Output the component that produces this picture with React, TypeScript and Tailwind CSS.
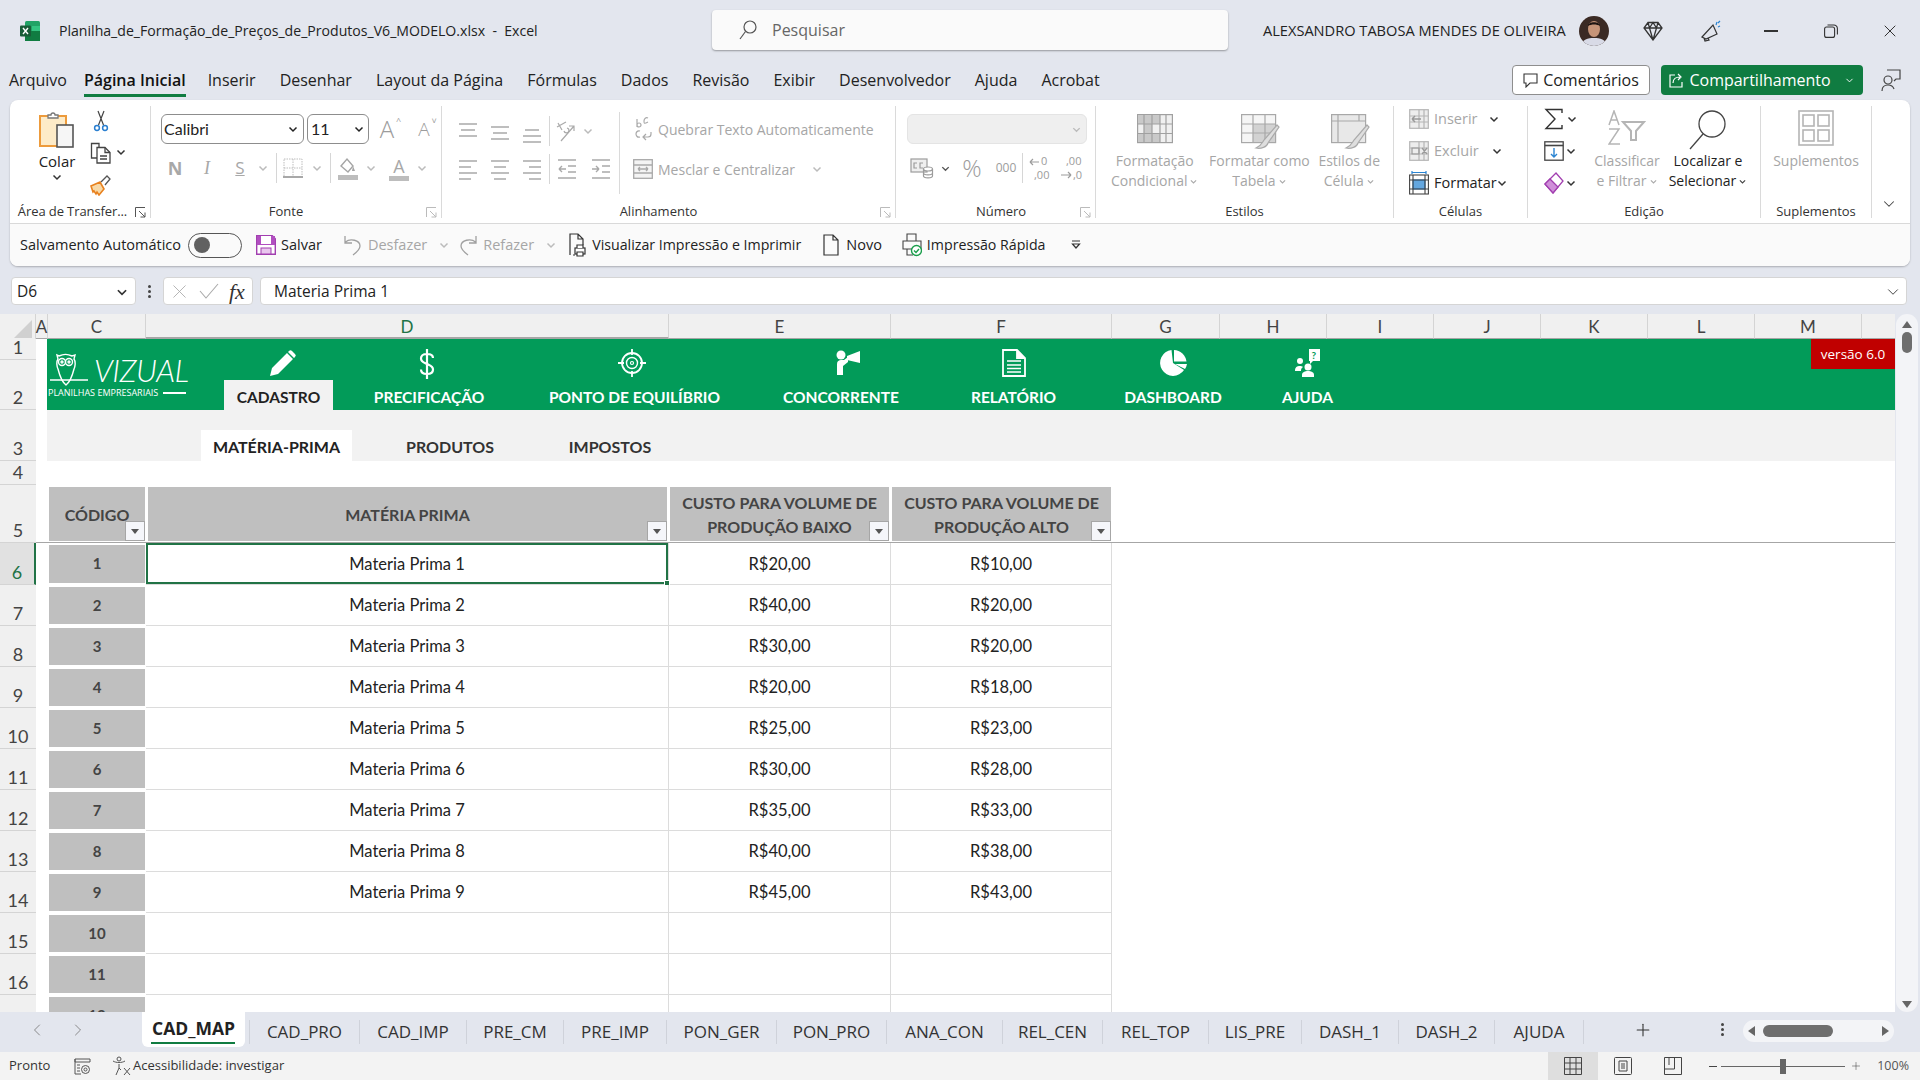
import React from "react";
import { ChevronDown, ChevronLeft, ChevronRight, Plus, X } from "lucide-react";

const ui = "font-['Open_Sans',sans-serif]";
const cal = "font-['Lato',sans-serif]";

const Chev = ({ c = "#444", s = 12 }: { c?: string; s?: number }) => (
  <svg width={s} height={s} viewBox="0 0 12 12" fill="none" stroke={c} strokeWidth="1.5">
    <path d="M2.5 4.5 6 8l3.5-3.5" />
  </svg>
);

const Sep = () => <div className="w-px h-[30px] bg-[#d6d6d6]" />;

const Launcher = ({ c = "#bbb", cls }: { c?: string; cls: string }) => (
  <svg className={cls} width="11" height="11" viewBox="0 0 11 11" fill="none" stroke={c}>
    <path d="M.5 10V.5H10M4 4l6 6M10 5.5V10H5.5" />
  </svg>
);

const Group = ({ label, launcher, cls, labelCls = "", children }: { label: string; launcher?: string; cls: string; labelCls?: string; children: React.ReactNode }) => (
  <div className={"relative flex flex-col my-[6px] h-[112px] border-r border-[#dadada] " + cls}>
    <div className="flex flex-1 min-h-0">{children}</div>
    <div className={"h-[14px] leading-[14px] text-[13px] text-center text-[#333] whitespace-nowrap " + labelCls}>{label}</div>
    {launcher && <Launcher c={launcher} cls="absolute right-[4px] bottom-0" />}
  </div>
);

const ExcelLogo = () => (
  <svg width="20" height="20" viewBox="0 0 20 20">
    <rect x="5" width="15" height="20" rx="1.5" fill="#21a366" />
    <rect x="5" y="10" width="15" height="10" fill="#107c41" />
    <rect x="12" y="5" width="8" height="5" fill="#33c481" />
    <rect y="4.5" width="11" height="11" rx="1" fill="#185c37" />
    <path d="M3 7l5 6M8 7l-5 6" stroke="#fff" strokeWidth="1.4" />
  </svg>
);

const Lines = ({ ys, xs, c = "#a9a9a9" }: { ys: number[]; xs: [number, number][]; c?: string }) => (
  <svg width="20" height="24" viewBox="0 0 20 24" fill="none" stroke={c} strokeWidth="1.5">
    {ys.map((y, i) => (
      <path key={i} d={`M${xs[i][0]} ${y}H${xs[i][1]}`} />
    ))}
  </svg>
);

const Paste = () => (
  <svg width="36" height="40" viewBox="0 0 36 40" fill="none">
    <rect x="1" y="6" width="26" height="30" fill="#fdebc8" stroke="#ed9b3c" strokeWidth="2" />
    <path d="M9 8V5h3a2 2 0 0 1 4 0h3v3z" fill="#fff" stroke="#777" strokeWidth="1.3" />
    <rect x="18" y="15" width="16" height="22" fill="#f6f6f6" stroke="#555" strokeWidth="1.6" />
  </svg>
);
const Scissors = () => (
  <svg width="16" height="22" viewBox="0 0 16 22" fill="none">
    <path d="M5 1l5.5 14M11 1 5.5 15" stroke="#444" strokeWidth="1.2" />
    <circle cx="4" cy="18" r="2.4" stroke="#2a7fd0" strokeWidth="1.5" />
    <circle cx="12" cy="18" r="2.4" stroke="#2a7fd0" strokeWidth="1.5" />
  </svg>
);
const CopyIc = () => (
  <svg width="22" height="22" viewBox="0 0 22 22" fill="none" stroke="#444" strokeWidth="1.3">
    <path d="M7 16H1.5V1.5H9V6" />
    <path d="M7 5.5h8l5 5V21H7z" fill="#fff" />
    <path d="M15 5.5v5h5M10 14h7M10 17h7" />
  </svg>
);
const Brush = () => (
  <svg width="22" height="22" viewBox="0 0 22 22" fill="none">
    <path d="M1 12l9-4 4 7-5 6-2-3-1 2-2-3-1 1z" fill="#f7d9a8" stroke="#e8811e" strokeWidth="1.6" />
    <path d="M11 8l6-6 3 3-5 6" fill="#fff" stroke="#555" strokeWidth="1.3" />
  </svg>
);

const Letter = ({ ch, sz, mark }: { ch: string; sz: string; mark: string }) => (
  <span className="relative flex items-center text-[#9c9c9c] leading-[24px] h-[24px]">
    <span className={sz}>{ch}</span>
    <span className="absolute -right-[7px] -top-[2px] text-[9px] leading-[12px]">{mark}</span>
  </span>
);

const BorderIc = () => (
  <svg width="20" height="20" viewBox="0 0 20 20" fill="none" stroke="#bdbdbd" strokeDasharray="1.5 1">
    <rect x="1" y="1" width="18" height="18" />
    <path d="M10 1v18M1 10h18" />
    <path d="M0 19h20" stroke="#a8a8a8" strokeWidth="2" strokeDasharray="0" />
  </svg>
);
const FillIc = () => (
  <svg width="20" height="26" viewBox="0 0 20 26" fill="none">
    <path d="M3 11l6-7 6 7-5 6z" stroke="#a5a5a5" strokeWidth="1.4" />
    <path d="M15 11l2 5h-3z" fill="#a5a5a5" />
    <rect y="20" width="20" height="5" fill="#bdbdbd" />
  </svg>
);
const OrientIc = () => (
  <svg width="22" height="24" viewBox="0 0 22 24" fill="none" stroke="#aaa" strokeWidth="1.2">
    <path d="M2 8l9-5M3 4l4 7M12 9a2.5 2.5 0 1 1-3 3" />
    <path d="M6 22 19 7M14 7h5v5" />
  </svg>
);
const WrapIc = () => (
  <svg width="18" height="26" viewBox="0 0 18 26" fill="none" stroke="#a9a9a9" strokeWidth="1.2">
    <path d="M2 11V3M2 9a2 2 0 1 0 4 0 2 2 0 0 0-4 0M13 2c-2-1-4 .5-4 3s0 3 4 1" />
    <path d="M5 15c-3-1-4 2-4 3s1 4 4 3M16 16v2a3 3 0 0 1-3 3H8M11 18l-3 3 3 3" />
  </svg>
);
const MergeIc = () => (
  <svg width="20" height="20" viewBox="0 0 20 20" fill="none" stroke="#a9a9a9" strokeWidth="1.3">
    <rect x=".7" y=".7" width="18.6" height="18.6" fill="#f4f4f4" />
    <path d="M.7 6h18.6M.7 14h18.6M5 10h10M5 10l2-2M5 10l2 2M15 10l-2-2M15 10l-2 2" />
  </svg>
);
const CurrencyIc = () => (
  <svg width="24" height="24" viewBox="0 0 24 24" fill="none" stroke="#9c9c9c" strokeWidth="1.2">
    <rect x="1" y="3" width="16" height="13" fill="#efefef" />
    <path d="M7 7H4v5h3M13 7h-3v5h3" />
    <ellipse cx="18" cy="13" rx="4.5" ry="2" fill="#fff" />
    <path d="M13.5 13v7c0 2.5 9 2.5 9 0v-7M13.5 17c0 2.5 9 2.5 9 0" />
  </svg>
);
const DecIc = ({ up }: { up: boolean }) => (
  <svg width="24" height="28" viewBox="0 0 24 28" fill="none" stroke="#9c9c9c" strokeWidth="1.2">
    <path d={up ? "M11 8H2M2 8l3-3M2 8l3 3" : "M1 21h10M11 21l-3-3M11 21l-3 3"} />
    <text x={up ? 13 : 6} y="11" fontSize="11" fill="#9c9c9c" stroke="none">{up ? "0" : ",00"}</text>
    <text x={up ? 6 : 13} y="25" fontSize="11" fill="#9c9c9c" stroke="none">{up ? ",00" : ",0"}</text>
  </svg>
);
const CondIc = () => (
  <svg width="36" height="30" viewBox="0 0 36 30" stroke="#a0a0a0" strokeWidth="1.2">
    <rect x=".6" y=".6" width="34.8" height="28" fill="#f0f0f0" />
    <rect x="1" y="1" width="22" height="9" fill="#c9c9c9" stroke="none" />
    <rect x="7" y="10" width="8" height="9" fill="#c9c9c9" stroke="none" />
    <rect x="1" y="19" width="22" height="9" fill="#c9c9c9" stroke="none" />
    <path d="M.6 10h34.8M.6 19.500h34.800M7 .6v28M15 .6v28M23 .6v28M29 .6v28" fill="none" />
  </svg>
);
const TableIc = ({ plain }: { plain?: boolean }) => (
  <svg width="40" height="36" viewBox="0 0 40 36" stroke="#a8a8a8" strokeWidth="1.2">
    <rect x=".6" y=".6" width="34" height="28" fill={plain ? "#e8e8e8" : "#f5f5f5"} />
    {!plain && <rect x="12" y="10" width="22" height="18" fill="#d2d2d2" stroke="none" />}
    <path d={plain ? "M.6 7h34M7 .6v28M28 .6v7" : "M.6 10h34M.6 19h34M12 .6v28M24 .6v28"} fill="none" />
    <path d="M36 11 23 26c-2 3-2 5-8 8 5 1 11-1 12-5l11-16z" fill="#dedede" stroke="#aaa" />
  </svg>
);
const InsIc = ({ x }: { x?: boolean }) => (
  <svg width="20" height="20" viewBox="0 0 20 20" fill="none" stroke="#b5b5b5" strokeWidth="1.2">
    <rect x=".7" y=".7" width="18.6" height="18.6" fill="#ededed" />
    <path d="M.7 7h18.6M.7 13h18.6M10 .7v18.6M15 .7v18.6" />
    {x ? <path d="M3 7h7v6H3zM13 7l5 6M18 7l-5 6" stroke="#999" /> : <path d="M12 10H3M3 10l3-3M3 10l3 3" stroke="#999" strokeWidth="1.5" />}
  </svg>
);
const FormatIc = () => (
  <svg width="20" height="24" viewBox="0 0 20 24" fill="none" stroke="#444" strokeWidth="1.1">
    <path d="M3 1.500h14M3 0v3M17 0v3" stroke="#2a84d2" strokeWidth="1.2" />
    <rect x=".6" y="4" width="18.8" height="19" />
    <rect x="4" y="9" width="12" height="9" fill="#63a7e0" stroke="#2a84d2" />
    <path d="M.6 9h18.8M.6 18h18.800M4 4v19M16 4v19" />
  </svg>
);
const FillDown = () => (
  <svg width="20" height="20" viewBox="0 0 20 20" fill="none">
    <rect x=".8" y=".8" width="18.4" height="18.4" stroke="#444" strokeWidth="1.3" />
    <path d="M.8 4.500h18.400" stroke="#444" strokeWidth="1.6" />
    <path d="M10 7v9M7 13l3 3 3-3" stroke="#2a84d2" strokeWidth="1.4" />
  </svg>
);
const Eraser = () => (
  <svg width="20" height="22" viewBox="0 0 20 22" fill="none">
    <path d="M1 12 12 1l7 8-10 12z" fill="#fff" stroke="#a23fb0" strokeWidth="1.3" />
    <path d="M1 12l5-5 8 8-5 6z" fill="#cf8fd9" stroke="#a23fb0" strokeWidth="1.3" />
  </svg>
);
const SortIc = () => (
  <svg width="38" height="36" viewBox="0 0 38 36" fill="none" stroke="#b5b5b5" strokeWidth="1.5">
    <path d="M1 15 6 1l5 14M3 10h6M1 19h10L1 34h11" />
    <path d="M15 12h21l-8 9v9h-5v-9z" strokeWidth="2" />
  </svg>
);
const BigSearch = () => (
  <svg width="38" height="40" viewBox="0 0 38 40" fill="none" stroke="#444" strokeWidth="1.3">
    <circle cx="23" cy="14" r="13" />
    <path d="M14 24 1 39" />
  </svg>
);
const Addins = () => (
  <svg width="36" height="36" viewBox="0 0 36 36" fill="none" stroke="#b5b5b5" strokeWidth="1.6">
    <rect x="1" y="1" width="34" height="34" />
    <rect x="5" y="5" width="11" height="11" />
    <rect x="20" y="5" width="11" height="11" />
    <rect x="5" y="20" width="11" height="11" />
    <rect x="20" y="20" width="11" height="11" />
  </svg>
);

const Big = ({ cls, icon, top, sub, off }: { cls: string; icon: React.ReactNode; top: string; sub: string; off?: boolean }) => (
  <div className={"flex flex-col items-center pt-[4px] text-[14px] leading-[20px] " + cls + (off ? " text-[#a6a6a6]" : " text-[#222]")}>
    <div className="h-[41px] flex items-start justify-center">{icon}</div>
    <span className="whitespace-nowrap">{top}</span>
    {sub && (
      <span className="flex items-center gap-[2px] whitespace-nowrap">
        {sub}
        <Chev s={9} c={off ? "#aaa" : "#444"} />
      </span>
    )}
  </div>
);

const menu = ["Arquivo", "Página Inicial", "Inserir", "Desenhar", "Layout da Página", "Fórmulas", "Dados", "Revisão", "Exibir", "Desenvolvedor", "Ajuda", "Acrobat"];

const TitleBar = () => (
  <div className="h-[62px] flex items-center text-[#222]">
    <div className="ml-[20px]"><ExcelLogo /></div>
    <div className="ml-[19px] w-[653px] text-[14.100px] whitespace-nowrap">Planilha_de_Formação_de_Preços_de_Produtos_V6_MODELO.xlsx&nbsp; -&nbsp; Excel</div>
    <div className="h-[40px] w-[516px] bg-[#fafafa] rounded-[4px] shadow-[0_1px_2px_rgba(0,0,0,0.35)] flex items-center pl-[27px] text-[16px] text-[#666] -mt-[2px]">
      <svg width="18" height="20" viewBox="0 0 18 20" fill="none" stroke="#555" strokeWidth="1.200">
        <circle cx="11" cy="7" r="6" />
        <path d="M6.500 11.500 1 19" />
      </svg>
      <span className="ml-[15px]">Pesquisar</span>
    </div>
    <div className="ml-[35px] w-[305px] text-[14.600px] whitespace-nowrap">ALEXSANDRO TABOSA MENDES DE OLIVEIRA</div>
    <svg className="ml-[11px]" width="30" height="30" viewBox="0 0 30 30">
      <clipPath id="av"><circle cx="15" cy="15" r="15" /></clipPath>
      <g clipPath="url(#av)">
        <rect width="30" height="30" fill="#3b2a24" />
        <path d="M2 30c1-7 7-8 13-8s12 1 13 8z" fill="#d8dae6" />
        <ellipse cx="15" cy="13" rx="6" ry="8" fill="#c69478" />
        <path d="M9 10c0-5 12-5 12 0-3-2-9-2-12 0z" fill="#1e1512" />
      </g>
    </svg>
    <svg className="ml-[34px]" width="20" height="20" viewBox="0 0 20 20" fill="none" stroke="#333" strokeWidth="1.300">
      <path d="M5 1.500h10L19 7l-9 12L1 7zM1 7h18M6.500 7 10 19l3.500-12M5 1.500 6.500 7 10 1.500 13.500 7 15 1.500" />
    </svg>
    <svg className="ml-[37px]" width="22" height="24" viewBox="0 0 22 24" fill="none" stroke="#333" strokeWidth="1.200">
      <path d="M2 18 13 6l4 9-11 5zM4 19l1 3 4-1-1-2" />
      <path d="M17 3l-1 3M20 7l-2 1M20 2l-2 2" stroke="#2a84d2" />
    </svg>
    <div className="ml-[42px] w-[14px] h-[1.500px] bg-[#333]" />
    <svg className="ml-[46px]" width="14" height="14" viewBox="0 0 14 14" fill="none" stroke="#333" strokeWidth="1.100">
      <rect x=".6" y="3" width="10" height="10.400" rx="2" />
      <path d="M3.500 1h6A3.500 3.500 0 0 1 13.400 4.500v6" />
    </svg>
    <X className="ml-[42px]" size={20} strokeWidth={1.200} color="#333" />
  </div>
);

const MenuBar = () => (
  <div className="h-[38px] flex items-center pl-[9px] pb-[2px] text-[16px] text-[#222]">
    <div className="flex gap-[24px] flex-1">
      {menu.map((m) => (
        <div key={m} className={m === "Página Inicial" ? "relative font-semibold text-[#111] -ml-[7px] mr-[-2px]" : ""}>
          <span className="whitespace-nowrap">{m}</span>
          {m === "Página Inicial" && <div className="absolute left-0 right-0 -bottom-[5px] h-[3px] bg-[#107c41]" />}
        </div>
      ))}
    </div>
    <div className="w-[138px] h-[30px] bg-white border border-[#8e8e8e] rounded-[4px] flex items-center justify-center gap-[5px]">
      <svg width="15" height="15" viewBox="0 0 15 15" fill="none" stroke="#333" strokeWidth="1.100">
        <path d="M1 1h13v9H7l-4 4v-4H1z" />
      </svg>
      Comentários
    </div>
    <div className="ml-[11px] w-[202px] h-[30px] bg-[#107c41] text-white rounded-[4px] flex items-center justify-center gap-[4px]">
      <svg width="16" height="16" viewBox="0 0 16 16" fill="none" stroke="#fff" strokeWidth="1.200">
        <path d="M6 3H1v12h12v-5M4 11c0-4 3-6 7-6M9 2l3 3-3 3" />
      </svg>
      Compartilhamento
      <ChevronDown className="ml-[9px]" size={11} color="#fff" />
    </div>
    <svg className="ml-[18px] mr-[19px]" width="20" height="24" viewBox="0 0 20 24" fill="none" stroke="#444" strokeWidth="1.200">
      <circle cx="7" cy="12" r="4" />
      <path d="M1 23c0-5 3-6 6-6s5 1 6 4M6 2h13v9h-4l-2 2" />
    </svg>
  </div>
);

const Ribbon = () => (
  <div className="mx-[10px] h-[166px] bg-white rounded-[8px] shadow-[0_1px_2px_rgba(0,0,0,0.25)] flex flex-col">
    <div className="h-[123px] flex text-[14px]">
      <Group label="Área de Transfer..." launcher="#555" cls="w-[141px] pr-[20px]" labelCls="pl-[5px] tracking-[-0.1px]">
        <div className="ml-[20px] w-[54px] flex flex-col items-center pt-[4px] text-[15px]">
          <Paste />
          <span className="mt-[1px] leading-[20px] text-[#222]">Colar</span>
          <Chev c="#333" />
        </div>
        <div className="ml-[6px] flex flex-col items-center pt-[4px] gap-[10px]">
          <Scissors />
          <div className="flex items-center">
            <CopyIc />
          </div>
          <Brush />
        </div>
        <div className="pt-[40px] ml-[3px]"><Chev c="#333" /></div>
      </Group>

      <Group label="Fonte" launcher="#bbb" cls="w-[291px] pl-[10px]" labelCls="pr-[30px]">
        <div className="flex flex-col pt-[8px]">
          <div className="flex items-center gap-[3px] h-[30px]">
            <div className={cal + " w-[143px] h-[30px] border border-[#8d8d8d] rounded-[6px] flex items-center justify-between pl-[2px] pr-[4px] text-[16px] text-[#222]"}>
              Calibri <Chev c="#222" />
            </div>
            <div className={cal + " w-[62px] h-[30px] border border-[#8d8d8d] rounded-[6px] flex items-center justify-between pl-[3px] pr-[3px] text-[16px] text-[#222]"}>
              11 <Chev c="#222" />
            </div>
            <div className="w-[30px] flex justify-center"><Letter ch="A" sz="text-[24px] font-light" mark="^" /></div>
            <div className="ml-[8px] w-[22px] flex justify-center"><Letter ch="A" sz="text-[19px] font-light" mark="˅" /></div>
          </div>
          <div className="mt-[9px] h-[30px] flex items-center text-[#a8a8a8]">
            <span className="w-[28px] text-center font-bold text-[18px]">N</span>
            <span className="w-[36px] text-center italic text-[18px] font-['Liberation_Serif',serif]">I</span>
            <span className="w-[30px] text-center underline text-[17px]">S</span>
            <span className="w-[16px] flex justify-center"><Chev c="#bbb" /></span>
            <span className="ml-[5px]"><Sep /></span>
            <span className="w-[32px] flex justify-center"><BorderIc /></span>
            <span className="w-[16px] flex justify-center"><Chev c="#bbb" /></span>
            <span className="ml-[5px]"><Sep /></span>
            <span className="w-[34px] flex justify-center"><FillIc /></span>
            <span className="w-[12px] flex justify-center"><Chev c="#bbb" /></span>
            <span className="w-[39px] flex flex-col items-center text-[18px] leading-[20px] pl-[5px]">A<span className="block w-[20px] h-[5px] bg-[#bdbdbd]" /></span>
            <span className="w-[12px] flex justify-center"><Chev c="#bbb" /></span>
          </div>
        </div>
      </Group>

      <Group label="Alinhamento" launcher="#bbb" cls="w-[454px] pl-[10px]" labelCls="pr-[30px]">
        <div className="w-[168px] border-r border-[#dadada] h-[82px] mt-[6px] flex flex-col">
          <div className="h-[38px] flex items-center">
            <span className="w-[32px] flex justify-center"><Lines ys={[5, 11, 17]} xs={[[1, 19], [3, 17], [1, 19]]} /></span>
            <span className="w-[32px] flex justify-center"><Lines ys={[8, 14, 20]} xs={[[1, 19], [3, 17], [1, 19]]} /></span>
            <span className="w-[32px] flex justify-center"><Lines ys={[11, 17, 23]} xs={[[3, 17], [1, 19], [1, 19]]} /></span>
            <span className="ml-[1px]"><Sep /></span>
            <span className="w-[32px] flex justify-center"><OrientIc /></span>
            <Chev c="#bbb" />
          </div>
          <div className="h-[38px] flex items-center">
            <span className="w-[32px] flex justify-center"><Lines ys={[4, 10, 16, 22]} xs={[[1, 19], [1, 13], [1, 19], [1, 13]]} /></span>
            <span className="w-[32px] flex justify-center"><Lines ys={[4, 10, 16, 22]} xs={[[1, 19], [4, 16], [1, 19], [4, 16]]} /></span>
            <span className="w-[32px] flex justify-center"><Lines ys={[4, 10, 16, 22]} xs={[[1, 19], [7, 19], [1, 19], [7, 19]]} /></span>
            <span className="ml-[1px]"><Sep /></span>
            <span className="w-[34px] flex justify-center">
              <svg width="20" height="22" viewBox="0 0 20 22" fill="none" stroke="#a9a9a9" strokeWidth="1.400"><path d="M1 2h18M11 8h8M11 14h8M1 20h18M9 11H2M2 11l3-3M2 11l3 3" /></svg>
            </span>
            <span className="w-[34px] flex justify-center">
              <svg width="20" height="22" viewBox="0 0 20 22" fill="none" stroke="#a9a9a9" strokeWidth="1.400"><path d="M1 2h18M11 8h8M11 14h8M1 20h18M1 11h7M8 11 5 8M8 11l-3 3" /></svg>
            </span>
          </div>
        </div>
        <div className="text-[#a6a6a6] text-[14px] pt-[8px]">
          <div className="h-[30px] flex items-center">
            <span className="w-[38px] pl-[15px]"><WrapIc /></span>
            <span className="whitespace-nowrap">Quebrar Texto Automaticamente</span>
          </div>
          <div className="mt-[10px] h-[30px] flex items-center">
            <span className="w-[38px] pl-[13px]"><MergeIc /></span>
            <span className="whitespace-nowrap">Mesclar e Centralizar</span>
            <span className="ml-[16px]"><Chev c="#bbb" /></span>
          </div>
        </div>
      </Group>

      <Group label="Número" launcher="#bbb" cls="w-[200px] pl-[11px]">
        <div className="flex flex-col pt-[8px]">
          <div className="w-[180px] h-[30px] rounded-[6px] bg-[#efefef] border border-[#e4e4e4] flex items-center justify-end pr-[4px]"><Chev c="#bbb" s={11} /></div>
          <div className="mt-[9px] h-[30px] flex items-center text-[#9c9c9c]">
            <span className="w-[30px] flex justify-center"><CurrencyIc /></span>
            <span className="w-[16px] flex justify-center"><Chev c="#555" s={11} /></span>
            <span className="w-[38px] text-center text-[24px] font-light">%</span>
            <span className="w-[30px] text-center text-[12px]">000</span>
            <span className="ml-[1px]"><Sep /></span>
            <span className="w-[34px] flex justify-center"><DecIc up /></span>
            <span className="w-[30px] flex justify-center"><DecIc up={false} /></span>
          </div>
        </div>
      </Group>

      <Group label="Estilos" cls="w-[298px]">
        <Big cls="w-[118px]" off icon={<div className="pt-[4px]"><CondIc /></div>} top="Formatação" sub="Condicional" />
        <Big cls="w-[92px]" off icon={<div className="pt-[4px] pl-[4px]"><TableIc /></div>} top="Formatar como" sub="Tabela" />
        <Big cls="w-[88px]" off icon={<div className="pt-[4px] pl-[4px]"><TableIc plain /></div>} top="Estilos de" sub="Célula" />
      </Group>

      <Group label="Células" cls="w-[134px] pl-[15px]" labelCls="pr-[15px]">
        <div className="flex flex-col gap-[6px] text-[14.500px] w-full">
          <div className="h-[26px] flex items-center text-[#a6a6a6]"><InsIc /><span className="ml-[5px] w-[54px]">Inserir</span><Chev c="#333" /></div>
          <div className="h-[26px] flex items-center text-[#a6a6a6]"><InsIc x /><span className="ml-[5px] w-[57px]">Excluir</span><Chev c="#333" /></div>
          <div className="h-[26px] flex items-center text-[#222]"><FormatIc /><span className="ml-[5px] w-[62px]">Formatar</span><Chev c="#333" /></div>
        </div>
      </Group>

      <Group label="Edição" cls="w-[233px]">
        <div className="w-[62px] pl-[16px] flex flex-col gap-[6px]">
          <div className="h-[26px] flex items-center">
            <svg width="20" height="22" viewBox="0 0 20 22" fill="none" stroke="#333" strokeWidth="1.400"><path d="M18 5V1.500H2L11 11 2 20.500h16V17" /></svg>
            <span className="ml-[2px]"><Chev c="#333" /></span>
          </div>
          <div className="h-[26px] flex items-center"><FillDown /><span className="ml-[1px]"><Chev c="#333" /></span></div>
          <div className="h-[26px] flex items-center"><Eraser /><span className="ml-[1px]"><Chev c="#333" /></span></div>
        </div>
        <Big cls="w-[74px]" off icon={<SortIc />} top="Classificar" sub="e Filtrar" />
        <Big cls="w-[88px]" icon={<BigSearch />} top="Localizar e" sub="Selecionar" />
      </Group>

      <Group label="Suplementos" cls="w-[111px]">
        <Big cls="w-full" off icon={<Addins />} top="Suplementos" sub="" />
      </Group>

      <div className="flex-1 flex justify-end items-end pb-[10px] pr-[12px]"><ChevronDown size={18} strokeWidth={1.400} color="#444" /></div>
    </div>

    <div className="h-[43px] flex items-center border-t border-[#d9d9d9] rounded-b-[8px] bg-[#fafafa] pl-[10px] text-[14.500px] text-[#222] whitespace-nowrap">
      <span className="w-[168px]">Salvamento Automático</span>
      <div className="w-[54px] h-[25px] rounded-full border border-[#555] flex items-center pl-[5px]">
        <div className="w-[16px] h-[16px] rounded-full bg-[#616161]" />
      </div>
      <svg className="ml-[14px]" width="20" height="20" viewBox="0 0 20 20" fill="none">
        <path d="M.7.7h15.600L19.300 3.700v15.600H.7z" fill="#fff" stroke="#a23fb0" strokeWidth="1.400" />
        <rect x="1" y="1" width="18" height="9" fill="#b14fc0" />
        <rect x="5" y="1" width="10" height="8" fill="#fff" />
        <rect x="5" y="13" width="10" height="6" fill="#e9c6ee" stroke="#a23fb0" />
      </svg>
      <span className="ml-[5px]">Salvar</span>
      <svg className="ml-[22px]" width="18" height="22" viewBox="0 0 18 22" fill="none" stroke="#a0a0a0" strokeWidth="1.300">
        <path d="M1 2v7h7M1.500 8C6 4 16 6 16 12c0 3-3 6-7 9" />
      </svg>
      <span className="ml-[6px] text-[#a6a6a6]">Desfazer</span>
      <span className="ml-[11px]"><Chev c="#bbb" /></span>
      <svg className="ml-[9px]" width="18" height="22" viewBox="0 0 18 22" fill="none" stroke="#a0a0a0" strokeWidth="1.300">
        <path d="M17 2v7h-7M16.500 8C12 4 2 6 2 12c0 3 3 6 7 9" />
      </svg>
      <span className="ml-[6px] text-[#a6a6a6]">Refazer</span>
      <span className="ml-[11px]"><Chev c="#bbb" /></span>
      <svg className="ml-[12px]" width="17" height="24" viewBox="0 0 17 24" fill="none" stroke="#333" strokeWidth="1.200">
        <path d="M1 22V1h8l5 5v6M9 1v5h5M4 22h2" />
        <rect x="6" y="15" width="10" height="6" fill="#fff" />
        <path d="M8 15v-3h6v3M8 19h6v4H8z" fill="#fff" />
      </svg>
      <span className="ml-[6px] text-[14.200px]">Visualizar Impressão e Imprimir</span>
      <svg className="ml-[22px]" width="16" height="22" viewBox="0 0 16 22" fill="none" stroke="#333" strokeWidth="1.200">
        <path d="M1 21V1h9l5 5v15zM10 1v5h5" />
      </svg>
      <span className="ml-[7px]">Novo</span>
      <svg className="ml-[20px]" width="20" height="24" viewBox="0 0 20 24" fill="none" stroke="#444" strokeWidth="1.100">
        <path d="M5 8V1h9v7M1 8h18v8H1zM5 16v6h6" />
        <circle cx="14.500" cy="17.500" r="5" fill="#fff" stroke="#1a9e4b" strokeWidth="1.400" />
        <path d="M12 17.500l2 2 3-3.500" stroke="#1a9e4b" strokeWidth="1.400" />
      </svg>
      <span className="ml-[5px] text-[14.200px]">Impressão Rápida</span>
      <svg className="ml-[25px]" width="10" height="12" viewBox="0 0 10 12" fill="none" stroke="#333" strokeWidth="1.200">
        <path d="M1 2h8M1.500 5l3.500 4 3.500-4z" />
      </svg>
    </div>
  </div>
);

const FormulaBar = () => (
  <div className="h-[37px] pt-[11px] flex items-start">
    <div className="flex items-start w-full h-[28px]">
      <div className="ml-[11px] w-[125px] h-[28px] bg-white rounded-[4px] border border-[#d5d5d5] flex items-center justify-between pl-[5px] pr-[6px] pt-px text-[15.500px] text-[#222]">
        D6 <Chev c="#333" s={14} />
      </div>
      <div className="w-[27px] h-[28px] flex flex-col items-center justify-center gap-[2px]">
        <i className="w-[3px] h-[3px] bg-[#444] rounded-full" /><i className="w-[3px] h-[3px] bg-[#444] rounded-full" /><i className="w-[3px] h-[3px] bg-[#444] rounded-full" />
      </div>
      <div className="w-[90px] h-[28px] bg-white rounded-[4px] border border-[#d5d5d5] flex items-center pl-[4px]">
        <X size={23} strokeWidth={0.900} color="#aaa" />
        <svg className="ml-[8px]" width="20" height="16" viewBox="0 0 20 16" fill="none" stroke="#aaa" strokeWidth="1.100"><path d="M1 8l6 7L19 1" /></svg>
        <span className="ml-[10px] italic font-['Liberation_Serif',serif] text-[22px] text-[#333]">fx</span>
      </div>
      <div className="ml-[7px] w-[1647px] h-[28px] bg-white rounded-[4px] border border-[#d5d5d5] flex items-center justify-between pl-[13px] pr-[4px] pt-px text-[15.500px] text-[#222]">
        Materia Prima 1 <ChevronDown size={18} strokeWidth={1.200} color="#333" />
      </div>
    </div>
  </div>
);

const cols = [
  { l: "A", c: "w-[12px]" },
  { l: "C", c: "w-[98px]" },
  { l: "D", c: "w-[523px] bg-[#e1e1e1] text-[#217346] border-b-2 border-b-[#217346]" },
  { l: "E", c: "w-[222px]" },
  { l: "F", c: "w-[221px]" },
  { l: "G", c: "w-[108px]" },
  { l: "H", c: "w-[107px]" },
  { l: "I", c: "w-[107px]" },
  { l: "J", c: "w-[107px]" },
  { l: "K", c: "w-[107px]" },
  { l: "L", c: "w-[107px]" },
  { l: "M", c: "w-[107px]" },
];

const rowsH = [
  { n: 1, c: "h-[21px] items-center" },
  { n: 2, c: "h-[50px]" },
  { n: 3, c: "h-[51px]" },
  { n: 4, c: "h-[24px]" },
  { n: 5, c: "h-[58px] border-b-[#a6a6a6]" },
  { n: 6, c: "h-[42px] bg-[#e1e1e1] text-[#217346] border-r-2 border-r-[#217346]" },
  ...[7, 8, 9, 10, 11, 12, 13, 14, 15, 16, 17].map((n) => ({ n, c: "h-[41px]" })),
];

const navIcon = {
  pencil: (
    <svg width="28" height="28" viewBox="0 0 28 28" fill="#fff">
      <path d="M1 27l2-8L18 4l6 6L9 25zM20 2a2 2 0 0 1 3 0l3 3a2 2 0 0 1 0 3l-1 1-6-6z" />
    </svg>
  ),
  dollar: (
    <svg width="16" height="30" viewBox="0 0 16 30" fill="none" stroke="#fff" strokeWidth="2.200">
      <path d="M8 0v30M14 9c0-3-3-4-6-4S2 6 2 9.500s3 4 6 5.500 6 2 6 5.500-3 4.500-6 4.500-6-1-6-4.500" />
    </svg>
  ),
  target: (
    <svg width="28" height="28" viewBox="0 0 28 28" fill="none" stroke="#fff" strokeWidth="1.800">
      <circle cx="14" cy="14" r="10" />
      <circle cx="14" cy="14" r="5.500" strokeWidth="1.400" />
      <circle cx="14" cy="14" r="1.500" strokeWidth="1.200" />
      <path d="M14 0v6M14 22v6M0 14h6M22 14h6" />
    </svg>
  ),
  speaker: (
    <svg width="25" height="26" viewBox="0 0 25 26" fill="#fff">
      <circle cx="5" cy="6" r="4.500" />
      <path d="M1 26V15c0-3 2-4 4-4h3l4-3v5l-5 4v9z" />
      <path d="M11 7l13-5v12l-13-3z" />
    </svg>
  ),
  report: (
    <svg width="24" height="28" viewBox="0 0 24 28" fill="none" stroke="#fff" strokeWidth="1.800">
      <path d="M1 27V1h14l8 8v18z" />
      <path d="M15 1v8h8" fill="#fff" />
      <path d="M5 12h14M5 16h14M5 19.500h14M5 23h14" strokeWidth="1.400" />
    </svg>
  ),
  pie: (
    <svg width="28" height="28" viewBox="0 0 28 28" fill="#fff">
      <path d="M12.500 1A13 13 0 1 0 25 21L14 14z" />
      <path d="M15 1a13 13 0 0 1 12.500 11.500H15z" />
      <path d="M16 15h12a13 13 0 0 1-2 5z" />
    </svg>
  ),
  help: (
    <svg width="26" height="28" viewBox="0 0 26 28" fill="#fff">
      <path d="M14 0h11v12h-7l-3 3v-3h-1z" />
      <text x="16.500" y="10" fontSize="10" fontWeight="700" fill="#029b59" fontFamily="Lato">?</text>
      <circle cx="5" cy="12" r="3" />
      <path d="M0 22c0-4 2-5 5-5 1 0 2 0 3 1-2 1-2 3-2 4z" />
      <circle cx="13" cy="18" r="3.500" />
      <path d="M7 28v-2c0-3 3-4 6-4s6 1 6 4v2z" />
    </svg>
  ),
};

const nav = [
  { t: "CADASTRO", i: navIcon.pencil, c: "w-[109px]", ic: "ml-[8px]", on: true },
  { t: "PRECIFICAÇÃO", i: navIcon.dollar, c: "ml-[41px] w-[110px]", ic: "mr-[5px]" },
  { t: "PONTO DE EQUILÍBRIO", i: navIcon.target, c: "ml-[64px] w-[173px]", ic: "mr-[5px]" },
  { t: "CONCORRENTE", i: navIcon.speaker, c: "ml-[62px] w-[116px]", ic: "ml-[14px]" },
  { t: "RELATÓRIO", i: navIcon.report, c: "ml-[71px] w-[87px]", ic: "" },
  { t: "DASHBOARD", i: navIcon.pie, c: "ml-[67px] w-[98px]", ic: "" },
  { t: "AJUDA", i: navIcon.help, c: "ml-[60px] w-[51px]", ic: "" },
];

const Banner = () => (
  <div className={"relative h-[71px] shrink-0 bg-[#029b59] text-white flex " + cal}>
    <div className="w-[177px] relative">
      <svg className="absolute left-[3px] top-[14px]" width="40" height="34" viewBox="0 0 40 34" fill="none" stroke="#fff" strokeWidth="1.400">
        <path d="M9 3c4-2 9-2 13 0l3-1-1 4c2 3 1 8 0 10-1 4-4 13-8 16-4-3-7-12-8-16-1-2-2-7 0-10L7 2z" />
        <circle cx="12" cy="9" r="3.500" /><circle cx="19" cy="9" r="3.500" />
        <circle cx="12" cy="9" r="1" /><circle cx="19" cy="9" r="1" />
        <path d="M0 27h38" />
      </svg>
      <span className="absolute left-[47px] top-[15px] italic font-light text-[31px] leading-[32px] font-['Lato',sans-serif] tracking-[-0.5px]">VIZUAL</span>
      <span className="absolute left-[1px] top-[48px] text-[9px] leading-[12px] font-['Open_Sans',sans-serif] whitespace-nowrap">PLANILHAS EMPRESARIAIS</span>
      <div className="absolute left-[116px] top-[53px] w-[23px] h-[2px] bg-white" />
    </div>
    {nav.map((n) => (
      <div key={n.t} className={"relative flex flex-col items-center " + n.c}>
        <div className={"h-[41px] flex items-start pt-[10px] justify-center " + n.ic}>{n.i}</div>
        <div className={"absolute left-0 right-0 bottom-0 flex items-center justify-center whitespace-nowrap text-[15.500px] font-bold " + (n.on ? "h-[30px] bg-[#f2f2f2] text-[#222] pt-[5px]" : "h-[30px] pt-[5px]")}>
          {n.t}
        </div>
      </div>
    ))}
    <div className={"absolute right-0 top-0 w-[84px] h-[30px] bg-[#c00000] flex items-center justify-center text-[13.500px] " + ui}>versão 6.0</div>
  </div>
);

const Filter = () => (
  <div className="absolute right-0 bottom-0 w-[20px] h-[20px] bg-[#f5f6fa] border border-[#a6a6a6] flex items-center justify-center">
    <div className="w-0 h-0 border-x-[4px] border-x-transparent border-t-[5px] border-t-[#555]" />
  </div>
);

const hdrRow = [
  { c: "w-[99px] pl-[2px] pr-px", t: ["CÓDIGO"] },
  { c: "w-[523px] px-[2px]", t: ["MATÉRIA PRIMA"] },
  { c: "w-[222px] pl-px pr-[2px]", t: ["CUSTO PARA VOLUME DE", "PRODUÇÃO BAIXO"] },
  { c: "w-[221px] pl-px pr-px", t: ["CUSTO PARA VOLUME DE", "PRODUÇÃO ALTO"] },
];

const data: [number, string, string, string][] = [
  [1, "Materia Prima 1", "R$20,00", "R$10,00"],
  [2, "Materia Prima 2", "R$40,00", "R$20,00"],
  [3, "Materia Prima 3", "R$30,00", "R$20,00"],
  [4, "Materia Prima 4", "R$20,00", "R$18,00"],
  [5, "Materia Prima 5", "R$25,00", "R$23,00"],
  [6, "Materia Prima 6", "R$30,00", "R$28,00"],
  [7, "Materia Prima 7", "R$35,00", "R$33,00"],
  [8, "Materia Prima 8", "R$40,00", "R$38,00"],
  [9, "Materia Prima 9", "R$45,00", "R$43,00"],
  [10, "", "", ""],
  [11, "", "", ""],
  [12, "", "", ""],
];

const Sheet = () => (
  <div className={"relative h-[698px] flex overflow-hidden " + cal}>
    <div className="w-[1895px] flex flex-col">
      <div className="h-[25px] flex text-[17px] text-[#444] shrink-0">
        <div className="w-[36px] bg-[#f0f0f0] flex items-end justify-end pr-[3px] pb-[1px] border-r border-[#d4d4d4]">
          <div className="w-0 h-0 border-l-[18px] border-l-transparent border-b-[18px] border-b-[#d0d0d0]" />
        </div>
        {cols.map((c) => (
          <div key={c.l} className={"bg-[#f0f0f0] flex items-center justify-center pt-[2px] border-r border-r-[#d4d4d4] border-b border-b-[#a6a6a6] " + c.c}>{c.l}</div>
        ))}
        <div className="flex-1 bg-[#f0f0f0] border-b border-b-[#a6a6a6]" />
      </div>
      <div className="flex flex-1 min-h-0">
        <div className="w-[36px] flex flex-col shrink-0 bg-[#f0f0f0] text-[18px] text-[#444]">
          {rowsH.map((r) => (
            <div key={r.n} className={"flex shrink-0 justify-center items-end pb-px border-b border-b-[#d4d4d4] leading-[22px] " + r.c}>{r.n < 17 ? r.n : ""}</div>
          ))}
        </div>
        <div className="flex-1 pl-[11px] bg-white flex flex-col min-w-0">
          <Banner />
          <div className={"h-[51px] shrink-0 bg-[#f2f2f2] flex items-end text-[16px] font-bold text-[#333]"}>
            <div className="ml-[154px] w-[151px] h-[31px] pt-[2px] bg-white flex items-center justify-center text-[#222]">MATÉRIA-PRIMA</div>
            <div className="ml-[55px] w-[86px] h-[31px] pt-[2px] flex items-center justify-center">PRODUTOS</div>
            <div className="ml-[76px] w-[82px] h-[31px] pt-[2px] flex items-center justify-center">IMPOSTOS</div>
          </div>
          <div className="h-[24px] shrink-0" />
          <div className="relative -ml-[11px] pl-[11px] h-[58px] shrink-0 flex border-b border-b-[#a6a6a6] pt-[2px] pb-px text-[16px] font-bold text-[#444]">
            {hdrRow.map((h, i) => (
              <div key={i} className={"h-full " + h.c}>
                <div className="relative h-full pt-[2px] bg-[#bfbfbf] flex flex-col items-center justify-center leading-[24px] whitespace-nowrap">
                  {h.t.map((l) => <span key={l}>{l}</span>)}
                  <Filter />
                </div>
              </div>
            ))}
          </div>
          {data.map((d, i) => (
            <div key={d[0]} className={"flex shrink-0 text-[16.500px] text-[#222] " + (i === 0 ? "h-[42px]" : "h-[41px]")}>
              <div className="w-[99px] pl-[2px] pr-px py-[1.500px] border-b border-[#fff]">
                <div className="h-full bg-[#bfbfbf] flex items-center justify-center font-bold text-[#444] text-[15px]">{d[0]}</div>
              </div>
              <div className="relative w-[523px] pt-px flex items-center justify-center border-r border-b border-[#dcdcdc]">
                {d[1]}
                {i === 0 && (
                  <div className="absolute inset-0 border-2 border-[#217346]">
                    <div className="absolute -right-[4px] -bottom-[4px] w-[6px] h-[6px] bg-[#217346] border border-white" />
                  </div>
                )}
              </div>
              <div className="w-[222px] pt-px flex items-center justify-center border-r border-b border-[#dcdcdc]">{d[2]}</div>
              <div className="w-[221px] pt-px flex items-center justify-center border-r border-b border-[#dcdcdc]">{d[3]}</div>
            </div>
          ))}
        </div>
      </div>
    </div>
    <div className="flex-1 bg-[#e3e6ee] flex">
      <div className="w-[22px] ml-[1px] bg-[#f3f4f7] rounded-full flex flex-col items-center pt-[7px] pb-[4px]">
        <div className="w-0 h-0 border-x-[5px] border-x-transparent border-b-[7px] border-b-[#666]" />
        <div className="mt-[4px] w-[10px] h-[21px] rounded-full bg-[#6e6e6e]" />
        <div className="mt-auto w-0 h-0 border-x-[5px] border-x-transparent border-t-[7px] border-t-[#666]" />
      </div>
    </div>
  </div>
);

const tabs = [
  { t: "CAD_PRO", c: "w-[110px]" },
  { t: "CAD_IMP", c: "w-[107px]" },
  { t: "PRE_CM", c: "w-[97px]" },
  { t: "PRE_IMP", c: "w-[103px]" },
  { t: "PON_GER", c: "w-[110px]" },
  { t: "PON_PRO", c: "w-[110px]" },
  { t: "ANA_CON", c: "w-[116px]" },
  { t: "REL_CEN", c: "w-[100px]" },
  { t: "REL_TOP", c: "w-[106px]" },
  { t: "LIS_PRE", c: "w-[93px]" },
  { t: "DASH_1", c: "w-[97px]" },
  { t: "DASH_2", c: "w-[96px]" },
  { t: "AJUDA", c: "w-[89px]" },
];

const TabBar = () => (
  <div className="h-[40px] flex text-[17px] text-[#333]">
    <div className="w-[142px] flex items-center pl-[27px] gap-[21px] pb-[4px]">
      <ChevronLeft size={20} strokeWidth={1} color="#777" />
      <ChevronRight size={20} strokeWidth={1} color="#777" />
    </div>
    <div className="relative w-[103px] h-[35px] bg-white rounded-b-[6px] flex items-center justify-center font-bold text-[17.500px] text-[#222] pb-[3px]">
      CAD_MAP
      <div className="absolute left-[9px] right-[10px] bottom-[3px] h-[2px] bg-[#107c41]" />
    </div>
    <div className="w-[4px]" />
    <div className="flex items-start pt-[8px]">
      {tabs.map((t) => (
        <div key={t.t} className={"h-[24px] flex items-center justify-center border-l border-[#cfd2da] " + t.c}>{t.t}</div>
      ))}
      <div className="h-[24px] border-l border-[#cfd2da]" />
    </div>
    <div className="w-[69px] flex justify-end items-start pt-[8px]"><Plus size={20} strokeWidth={1.300} color="#333" /></div>
    <div className="w-[90px] flex flex-col items-end justify-center gap-[2px] pb-[6px] pr-[19px]">
      <i className="w-[3px] h-[3px] bg-[#444] rounded-full" /><i className="w-[3px] h-[3px] bg-[#444] rounded-full" /><i className="w-[3px] h-[3px] bg-[#444] rounded-full" />
    </div>
    <div className="mt-[8px] w-[151px] h-[22px] bg-[#f3f4f7] rounded-full flex items-center px-[5px]">
      <div className="w-0 h-0 border-y-[5px] border-y-transparent border-r-[7px] border-r-[#666]" />
      <div className="ml-[8px] w-[70px] h-[12px] rounded-full bg-[#6e6e6e]" />
      <div className="ml-auto w-0 h-0 border-y-[5px] border-y-transparent border-l-[7px] border-l-[#666]" />
    </div>
  </div>
);

const StatusBar = () => (
  <div className="h-[28px] bg-[#f3f3f3] flex items-center pl-[9px] text-[13px] text-[#333]">
    <span className="w-[65px]">Pronto</span>
    <svg width="17" height="17" viewBox="0 0 17 17" fill="none" stroke="#555" strokeWidth="1">
      <path d="M1 1h15v3H1zM1 1v15h6" />
      <path d="M3 7h3M3 10h3M3 13h3" />
      <circle cx="11.500" cy="11.500" r="4" /><circle cx="11.500" cy="11.500" r="1.500" />
    </svg>
    <svg className="ml-[21px]" width="20" height="20" viewBox="0 0 20 20" fill="none" stroke="#555" strokeWidth="1">
      <circle cx="7" cy="3" r="2" />
      <path d="M1 5c3 2 9 2 12 0M7 8v4l-3 7M7 12l2 2M12 12l6 7M18 12l-6 7" />
    </svg>
    <span className="ml-[1px] flex-1">Acessibilidade: investigar</span>
    <div className="w-[50px] h-[28px] bg-[#dedede] flex items-center justify-center">
      <svg width="18" height="18" viewBox="0 0 18 18" fill="none" stroke="#444"><path d="M.5.5h17v17H.5zM.5 6h17M.5 12h17M6 .5v17M12 .5v17" /></svg>
    </div>
    <div className="w-[50px] flex justify-center">
      <svg width="18" height="18" viewBox="0 0 18 18" fill="none" stroke="#444"><rect x=".5" y=".5" width="17" height="17" rx="1" /><path d="M5 4h8v10H5zM7 7h4M7 9h4M7 11h4" /></svg>
    </div>
    <div className="w-[50px] flex justify-center">
      <svg width="18" height="18" viewBox="0 0 18 18" fill="none" stroke="#444"><path d="M.5.5h17v17H.5zM.5 12h10V.5M5 .5V8" /></svg>
    </div>
    <div className="ml-[11px] w-[8px] h-[1px] bg-[#444]" />
    <div className="relative ml-[4px] w-[124px] h-px bg-[#666]">
      <div className="absolute left-[59px] -top-[7px] w-[6px] h-[15px] bg-[#666]" />
    </div>
    <Plus className="ml-[5px]" size={12} strokeWidth={1} color="#333" />
    <span className="ml-[15px] mr-[11px] text-[12.500px] text-[#555]">100%</span>
  </div>
);

export default function App() {
  return (
    <div className={"w-[1920px] h-[1080px] bg-[#e3e6ee] overflow-hidden " + ui}>
      <TitleBar />
      <MenuBar />
      <Ribbon />
      <FormulaBar />
      <div className="h-[11px]" />
      <Sheet />
      <TabBar />
      <StatusBar />
    </div>
  );
}
